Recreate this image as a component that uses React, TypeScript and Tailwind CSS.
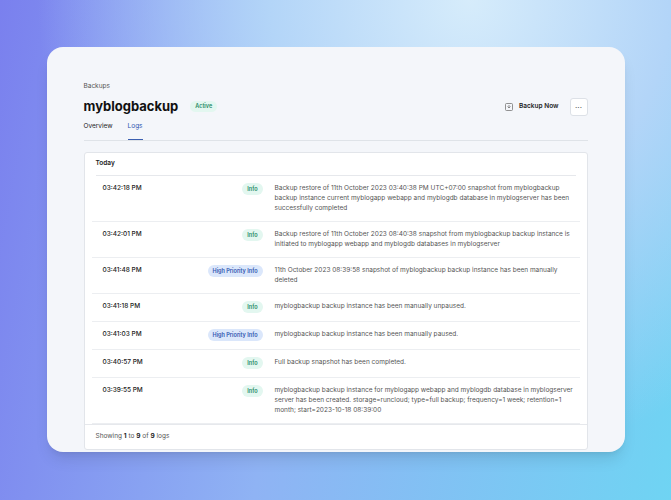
import React from "react";

type Log = { time: string; level: "info" | "high"; msg: string };

const logs: Log[] = [
  { time: "03:42:18 PM", level: "info", msg: "Backup restore of 11th October 2023 03:40:38 PM UTC+07:00 snapshot from myblogbackup backup instance current myblogapp webapp and myblogdb database in myblogserver has been successfully completed" },
  { time: "03:42:01 PM", level: "info", msg: "Backup restore of 11th October 2023 08:40:38 snapshot from myblogbackup backup instance is initiated to myblogapp webapp and myblogdb databases in myblogserver" },
  { time: "03:41:48 PM", level: "high", msg: "11th October 2023 08:39:58 snapshot of myblogbackup backup instance has been manually deleted" },
  { time: "03:41:18 PM", level: "info", msg: "myblogbackup backup instance has been manually unpaused." },
  { time: "03:41:03 PM", level: "high", msg: "myblogbackup backup instance has been manually paused." },
  { time: "03:40:57 PM", level: "info", msg: "Full backup snapshot has been completed." },
  { time: "03:39:55 PM", level: "info", msg: "myblogbackup backup instance for myblogapp webapp and myblogdb database in myblogserver server has been created. storage=runcloud; type=full backup; frequency=1 week; retention=1 month; start=2023-10-18 08:39:00" },
];

const Badge = ({ level }: { level: Log["level"] }) =>
  level === "info" ? (
    <span className="rounded-full bg-[#e3f7f0] px-[5px] py-[1px] text-[5.5px] font-semibold text-[#1f8a65]">Info</span>
  ) : (
    <span className="rounded-full bg-[#dbe7fb] px-[5px] py-[1px] text-[5.5px] font-semibold text-[#2f56b0]">High Priority Info</span>
  );

export default function App() {
  return (
    <div
      className="flex h-[500px] w-[671px] items-start justify-center pt-[47px]"
      style={{ fontFamily: "Inter, 'Noto Sans', sans-serif", background: "radial-gradient(ellipse at 70% 0%, #d6ecfb 0%, #b3d5f8 30%, transparent 65%), linear-gradient(100deg, #7a80ee 0%, #8fb3f4 45%, #6fd4f3 100%)" }}
    >
      <div className="h-[405px] w-[578px] rounded-[16px] bg-[#f4f6fa] px-[37px] pt-[35px] shadow-lg">
        <div className="text-[6.5px] text-[#555]">Backups</div>
        <div className="mt-[5px] flex items-center justify-between">
          <div className="flex items-center gap-[12px]">
            <span className="text-[13px] font-bold text-[#111]">myblogbackup</span>
            <span className="rounded-full bg-[#e3f7f0] px-[5px] py-[1px] text-[5.5px] font-semibold text-[#1f8a65]">Active</span>
          </div>
          <div className="flex items-center gap-[6px]">
            <button className="flex items-center gap-[6px] px-[5px] text-[6.5px] font-semibold text-[#222]">
              <svg width="8" height="8" viewBox="0 0 8 8" fill="none" stroke="#777" strokeWidth="0.8">
                <rect x="0.5" y="0.5" width="7" height="7" rx="1" />
                <path d="M2.5 3.5 4 5 5.5 3.5M4 5V2" />
              </svg>
              Backup Now
            </button>
            <button className="flex h-[18px] w-[18px] items-center justify-center rounded-[3px] border border-[#dde1e7] bg-white text-[8px] leading-none text-[#444]">···</button>
          </div>
        </div>
        <div className="mt-[6px] flex gap-[15px] border-b border-[#dfe3e8] text-[6.5px]">
          <span className="pb-[7px] text-[#222]">Overview</span>
          <span className="border-b border-[#3b5fb0] pb-[7px] text-[#2f56b0]">Logs</span>
        </div>
        <div className="mt-[11px] rounded-[3px] border border-[#e2e5ea] bg-white">
          <div className="mx-[11px] border-b border-[#e6e8ec] py-[6px] text-[6.5px] font-semibold text-[#222]">Today</div>
          {logs.map((l, i) => (
            <div key={i} className="mx-[7px] flex border-b border-[#eceef1] pb-[8px] pt-[7px] text-[6.5px] leading-[10px] last:border-b-0">
              <div className="w-[104px] pl-[11px] font-medium text-[#222]">{l.time}</div>
              <div className="flex w-[67px] items-start justify-end"><Badge level={l.level} /></div>
              <div className="ml-[12px] flex-1 pr-[4px] text-[#555]">{l.msg}</div>
            </div>
          ))}
          <div className="border-t border-[#e6e8ec] px-[11px] py-[7px] text-[6.5px] text-[#555]">
            Showing <b className="text-[#222]">1</b> to <b className="text-[#222]">9</b> of <b className="text-[#222]">9</b> logs
          </div>
        </div>
      </div>
    </div>
  );
}
